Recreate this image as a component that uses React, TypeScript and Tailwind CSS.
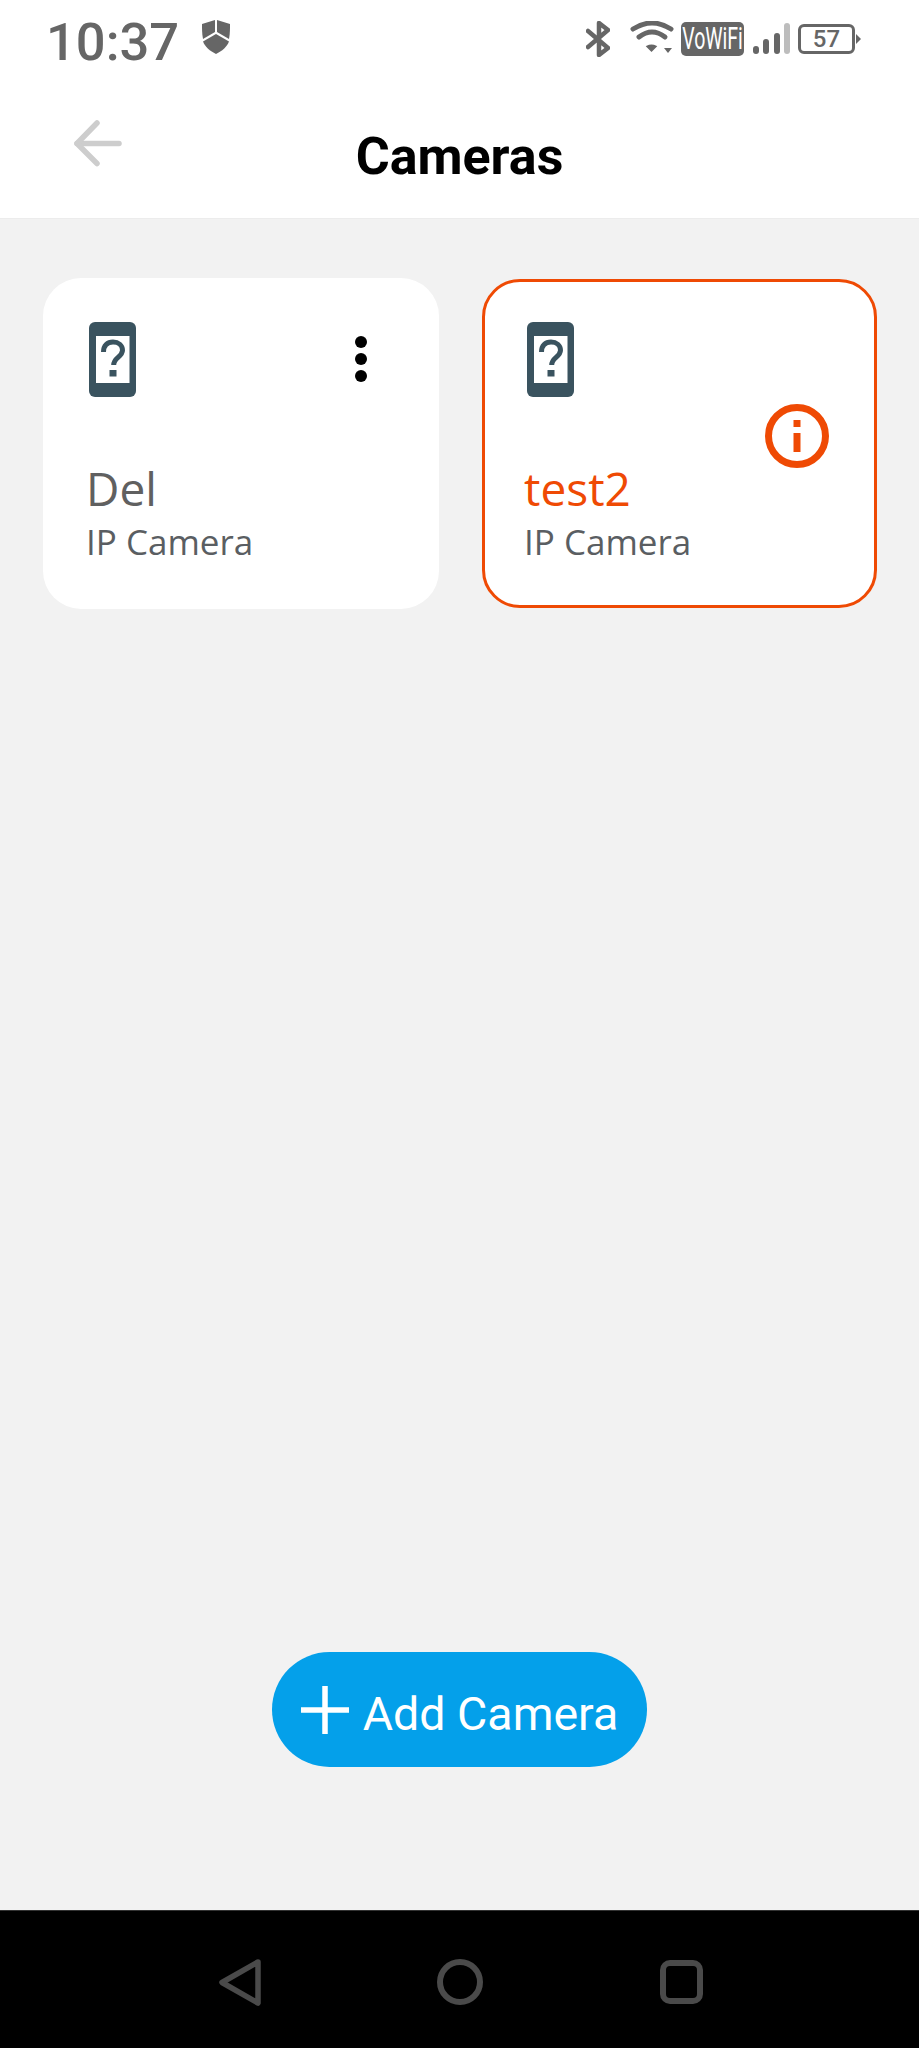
import React from "react";

function DeviceIcon() {
  return (
    <svg width="47" height="75" viewBox="0 0 47 75" className="block">
      <rect x="0" y="0" width="47" height="75" rx="6" fill="#3a535f" />
      <rect x="7" y="14" width="33.500" height="47" fill="#ffffff" />
      <path d="M14.500 30c0-6.500 4-10 9.500-10s9.500 3.300 9.500 8.300c0 6.700-8.800 7-8.800 14.700" fill="none" stroke="#3a535f" strokeWidth="5" />
      <rect x="20.500" y="48" width="7" height="6.500" fill="#3a535f" />
    </svg>
  );
}

function Card({ name, error }: { name: string; error?: boolean }) {
  return (
    <div
      className={
        error
          ? "relative h-[329px] w-[395px] rounded-[38px] border-[3px] border-[#ef4a04] bg-white pl-[42px] pt-[40px]"
          : "relative h-[331px] w-[396px] rounded-[38px] bg-white pl-[46px] pt-[44px]"
      }
    >
      <div className="flex h-[75px] items-start justify-between">
        <DeviceIcon />
        {!error && (
          <div className="mr-[72px] mt-[14px] flex flex-col gap-[5px]">
            <span className="block h-[12px] w-[12px] rounded-full bg-black" />
            <span className="block h-[12px] w-[12px] rounded-full bg-black" />
            <span className="block h-[12px] w-[12px] rounded-full bg-black" />
          </div>
        )}
      </div>
      {error && (
        <svg width="64" height="64" viewBox="0 0 64 64" className="absolute right-[45px] top-[122px]">
          <circle cx="32" cy="32" r="28.500" fill="none" stroke="#ef4a04" strokeWidth="7" />
          <rect x="28.500" y="16" width="7" height="7" fill="#ef4a04" />
          <rect x="28.500" y="29" width="7" height="19" fill="#ef4a04" />
        </svg>
      )}
      <div
        className={
          error
            ? "-ml-[3px] mt-[60px] font-['Open_Sans',sans-serif] text-[46px] leading-[62px] text-[#ef4a04]"
            : "-ml-[3px] mt-[60px] font-['Open_Sans',sans-serif] text-[46px] leading-[62px] text-[#606060]"
        }
      >
        {name}
      </div>
      <div className="-ml-[3px] font-['Open_Sans',sans-serif] text-[35px] leading-[46px] text-[#5a5e62]">IP Camera</div>
    </div>
  );
}

function StatusIcons() {
  return (
    <div className="mb-[3px] ml-auto flex items-center">
      <svg width="24" height="36" viewBox="0 0 24 36" fill="none" stroke="#666" strokeWidth="4.500" strokeLinecap="round" strokeLinejoin="round">
        <path d="M2 10l20 17-9 7V2l9 7L2 26" />
      </svg>
      <svg width="46" height="36" viewBox="0 0 46 36" className="ml-[19px]" fill="none" stroke="#666" strokeLinecap="round">
        <path d="M4 8Q23 -4 42 8" strokeWidth="5" />
        <path d="M10 16Q23 6 36 16" strokeWidth="5" />
        <path d="M18 25.500Q22.500 23 27 25.500L22.500 30z" fill="#666" strokeWidth="1.500" />
        <path d="M35 27h8l-4 5z" fill="#666" stroke="none" />
      </svg>
      <div className="ml-[6px] flex h-[34px] w-[63px] items-center justify-center rounded-[5px] bg-[#666] font-['Roboto',sans-serif] text-[19.500px] leading-none text-white">
        <span className="inline-block origin-center scale-y-[1.6]">VoWiFi</span>
      </div>
      <svg width="37" height="32" viewBox="0 0 37 32" className="ml-[9px]">
        <rect x="0" y="23" width="6" height="8" rx="3" fill="#666" />
        <rect x="10" y="16" width="6" height="15" rx="3" fill="#666" />
        <rect x="21" y="10" width="6" height="21" rx="3" fill="#666" />
        <rect x="31" y="0" width="6" height="31" rx="3" fill="#bdbdbd" />
      </svg>
      <div className="relative ml-[8px] mr-[64px] flex h-[30px] w-[57px] items-center justify-center rounded-[6px] border-[3px] border-[#666] font-['Roboto',sans-serif] text-[24px] font-medium leading-none text-[#666]">
        57
        <span className="absolute -right-[9px] top-[7px] h-0 w-0 border-y-[5px] border-l-[5px] border-y-transparent border-l-[#666]" />
      </div>
    </div>
  );
}

export default function App() {
  return (
    <div className="flex h-[2048px] w-[919px] flex-col overflow-hidden bg-white">
      <div className="flex h-[80px] items-center pl-[46px]">
        <span className="mt-[5px] font-['Roboto',sans-serif] text-[52.500px] font-medium leading-none text-[#666]">10:37</span>
        <svg width="28" height="34" viewBox="0 0 28 34" className="mb-[6px] ml-[23px]">
          <path d="M0 4l13-4v12l-12 7C0 14 0 9 0 4z" fill="#666" />
          <path d="M28 4L15 0v12l12 7c1-5 1-10 1-15z" fill="#666" />
          <path d="M14 14l13 7.500C25 27 20 31 14 34 8 31 3 27 1 21.500z" fill="#666" />
        </svg>
        <StatusIcons />
      </div>
      <div className="relative flex h-[139px] items-center justify-center border-b border-[#ececec] pt-[16px]">
        <svg width="48" height="48" viewBox="0 0 48 48" fill="none" stroke="#cdcdcd" strokeWidth="5.500" strokeLinecap="round" strokeLinejoin="round" className="absolute left-[74px] top-[40px]">
          <path d="M45 23.500H3" />
          <path d="M23 3L3 23.500l20 20" />
        </svg>
        <h1 className="font-['Roboto',sans-serif] text-[52px] font-bold leading-none text-black">Cameras</h1>
      </div>
      <main className="flex flex-1 flex-col items-center bg-[#f2f2f2]">
        <div className="flex w-full items-start justify-between pl-[43px] pr-[42px] pt-[59px]">
          <Card name="Del" />
          <div className="pt-[1px]">
            <Card name="test2" error />
          </div>
        </div>
        <button className="mb-[143px] mt-auto flex h-[115px] w-[375px] items-center justify-center rounded-full bg-[#04a0ea] font-['Roboto',sans-serif] text-[46.500px] leading-none text-white">
          <svg width="48" height="48" viewBox="0 0 48 48" className="mr-[14px]" stroke="#fff" strokeWidth="5.500">
            <path d="M24 0v48M0 24h48" />
          </svg>
          <span className="pt-[10px]">Add Camera</span>
        </button>
      </main>
      <nav className="flex h-[138px] items-start border-t border-[#333] bg-black pt-[48px]">
        <svg width="42" height="47" viewBox="0 0 42 47" className="ml-[219px]" fill="none" stroke="#4a4a4a" strokeWidth="5.500" strokeLinejoin="round">
          <path d="M39 3L3 23.500 39 44z" />
        </svg>
        <svg width="46" height="46" viewBox="0 0 46 46" className="ml-[176px]" fill="none" stroke="#4a4a4a" strokeWidth="6">
          <circle cx="23" cy="23" r="20" />
        </svg>
        <svg width="43" height="44" viewBox="0 0 43 44" className="ml-[177px] mt-[1px]" fill="none" stroke="#4a4a4a" strokeWidth="6">
          <rect x="3" y="3" width="37" height="38" rx="7" />
        </svg>
      </nav>
    </div>
  );
}
